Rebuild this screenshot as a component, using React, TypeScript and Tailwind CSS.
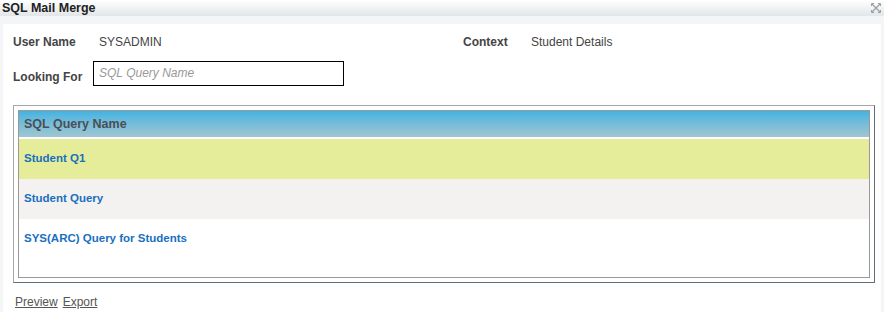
const rows = [
  { name: 'Student Q1', bg: 'bg-[#e5ed9a]' },
  { name: 'Student Query', bg: 'bg-[#f3f2f0]' },
  { name: 'SYS(ARC) Query for Students', bg: 'bg-white' },
];

export default function App() {
  return (
    <div className="w-[884px] h-[312px] bg-[#f3f5f6] font-['Liberation_Sans',Arial,sans-serif] text-[12px] text-[#444] flex flex-col">
      <div className="h-4 flex items-center justify-between pl-[2px] pr-[3px] bg-gradient-to-b from-white to-[#e2e6e8]">
        <span className="font-bold text-[#222] text-[12.5px] leading-none">SQL Mail Merge</span>
        <svg width="10" height="10" viewBox="0 0 10 10" className="text-[#9aa0a4]">
          <path d="M1 1 L9 9 M9 1 L1 9" stroke="currentColor" strokeWidth="1.2" fill="none" />
          <path d="M0.5 0.5 H3 M0.5 0.5 V3 M9.5 0.5 H7 M9.5 0.5 V3 M0.5 9.5 H3 M0.5 9.5 V7 M9.5 9.5 H7 M9.5 9.5 V7" stroke="currentColor" strokeWidth="1" fill="none" />
        </svg>
      </div>
      <div className="flex-1 mt-2 ml-[3px] mr-[3px] bg-white pl-[10px] pr-[7px] pt-[10px]">
        <div className="flex items-center h-4">
          <span className="w-[86px] font-bold">User Name</span>
          <span className="w-[364px]">SYSADMIN</span>
          <span className="w-[68px] font-bold">Context</span>
          <span>Student Details</span>
        </div>
        <div className="flex items-center mt-[10px]">
          <span className="w-[80px] font-bold pt-[8px]">Looking For</span>
          <input
            placeholder="SQL Query Name"
            className="w-[251px] h-[25px] border border-black px-[5px] text-[12px] italic placeholder:text-[#999] outline-none"
          />
        </div>
        <div className="mt-[19px] border border-[#a7a7a7] border-r-[#5d6d7a] border-b-[#5d6d7a] p-1 w-[862px] h-[178px]">
          <div className="border border-[#999] h-full">
            <div className="h-[28px] flex items-center px-[5px] font-bold text-[12.5px] text-[#4a4f55] bg-gradient-to-b from-[#42b3e1] to-[#9fc5d1] border-b-2 border-white">
              SQL Query Name
            </div>
            {rows.map((r) => (
              <div key={r.name} className={`h-10 flex items-center px-[5px] font-bold text-[11.5px] text-[#1a6fbf] ${r.bg}`}>
                {r.name}
              </div>
            ))}
          </div>
        </div>
        <div className="mt-[10px] flex gap-[5px] pl-[2px] text-[#555]">
          <a className="underline cursor-pointer">Preview</a>
          <a className="underline cursor-pointer">Export</a>
        </div>
      </div>
    </div>
  );
}
